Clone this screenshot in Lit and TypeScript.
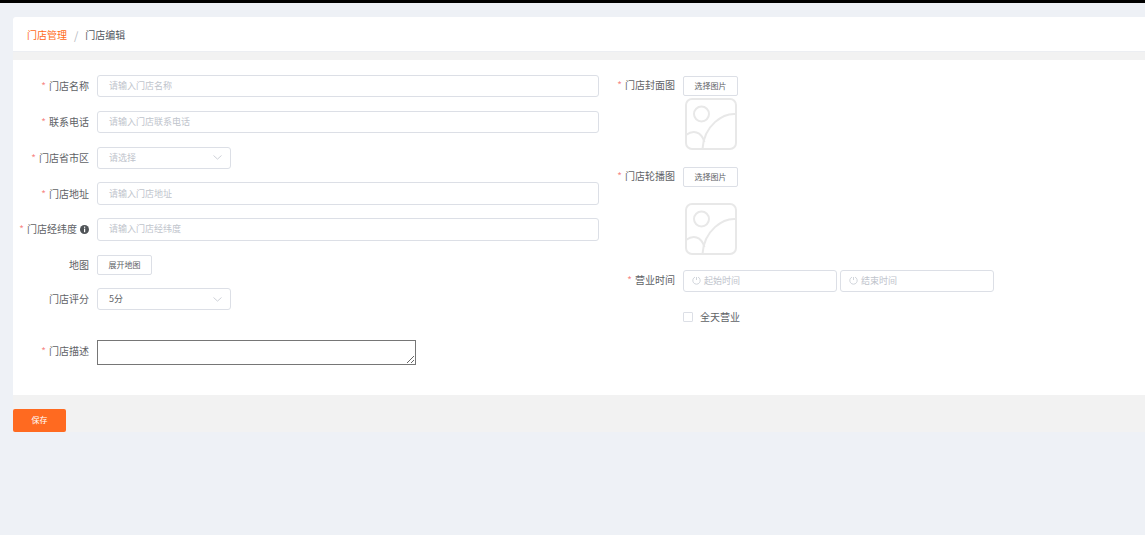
import { LitElement, html, css, svg } from "lit";
import { customElement } from "lit/decorators.js";

const FONT = css`"Noto Sans CJK SC", "Liberation Sans", sans-serif`;

const chevron = html`<svg class="chev" width="9" height="5" viewBox="0 0 9 5" fill="none"><path d="M.5.5l4 3.6 4-3.6" stroke="#c8ccd4" stroke-width=".9"/></svg>`;
const clock = html`<svg class="clock" width="9" height="9" viewBox="0 0 9 9" fill="none"><path d="M3 1.1a3.7 3.7 0 1 0 3 0" stroke="#ccd0d7" stroke-width=".9"/><path d="M4.5 1v3" stroke="#ccd0d7" stroke-width=".9"/></svg>`;
const info = html`<svg class="info" width="9" height="9" viewBox="0 0 9 9"><circle cx="4.5" cy="4.5" r="4.5" fill="#505458"/><rect x="4" y="1.6" width="1.2" height="1.2" fill="#fff"/><rect x="4" y="3.6" width="1.2" height="3.6" fill="#fff"/></svg>`;
const picture = svg`<rect x="1" y="1" width="50" height="50" rx="6" /><circle cx="16.5" cy="16" r="7.5" /><path d="M51 16C38 15 19 27 17.5 51" /><path d="M1 37C8 32 16 33 19.5 44" />`;

@customElement("app-root")
export class AppRoot extends LitElement {
  static styles = css`
    :host { display: block; height: 535px; background: #eef1f6; font-family: ${FONT}; color: #606266; font-size: 10px; overflow: hidden; }
    .topbar { height: 3px; background: #000; }
    .page { margin: 14px 0 0 13px; }
    .crumbs { height: 35px; background: #fff; border-radius: 3px 0 0 0; display: flex; align-items: center; padding: 1px 0 0 14px; box-sizing: border-box; border-bottom: 1px solid #eceef2; line-height: 14px; }
    .crumb-link { color: #ff6a20; }
    .sep { color: #b4b8c0; margin: 0 7px; font-size: 11px; }
    .crumb-current { color: #505660; }
    .band { height: 8px; background: #f2f2f2; }
    .form { background: #fff; height: 335px; display: flex; padding-top: 15px; box-sizing: border-box; }
    .col { width: 586px; flex: none; }
    .row { display: flex; align-items: center; }
    .label { width: 76px; flex: none; margin-right: 8px; display: flex; justify-content: flex-end; align-items: center; line-height: 14px; white-space: nowrap; }
    .star { color: #f78989; margin-right: 3px; }
    .info-wrap { margin-left: 3px; display: flex; }
    .input { height: 22.4px; box-sizing: border-box; border: 1px solid #dcdfe6; border-radius: 3px; background: #fff; display: flex; align-items: center; padding: 0 11px; font-size: 9px; color: #c0c4cc; line-height: 12px; }
    .left .row { margin-bottom: 13.4px; }
    .left .row.last-field { margin-bottom: 0; }
    .wide { width: 502px; }
    .select { width: 134px; justify-content: space-between; padding-right: 8px; }
    .select.filled { color: #606266; }
    .left .row.map { margin-top: 14.4px; margin-bottom: 13px; }
    .left .row.rate { margin-bottom: 30px; }
    .desc-label { margin-top: -4px; }
    .btn { height: 20px; box-sizing: border-box; border: 1px solid #dcdfe6; border-radius: 2px; background: #fff; display: flex; align-items: center; justify-content: center; font-size: 8px; color: #606266; line-height: 12px; }
    .btn-map { width: 55px; }
    .btn-pick { width: 55px; }
    textarea { display: block; box-sizing: border-box; width: 319px; height: 25px; margin: 0; padding: 2px; border: 1px solid #767676; background: #fff; }
    .right { padding-top: 1px; }
    .right .label { margin-top: -2px; }
    .img { display: block; margin-left: 86px; fill: none; stroke: #e8e8e8; stroke-width: 2; }
    .img1 { margin-top: 2px; margin-bottom: 17.3px; }
    .img2 { margin-top: 15.3px; margin-bottom: 15px; }
    .times { display: flex; gap: 3px; }
    .time { width: 154px; height: 22.7px; padding: 0 0 0 8px; gap: 3px; }
    .allday { display: flex; align-items: center; margin: 19.5px 0 0 84px; height: 10px; line-height: 10px; }
    .check { width: 10px; height: 10px; box-sizing: border-box; border: 1px solid #dcdfe6; border-radius: 1px; margin-right: 7px; }
    .footer { background: #f2f2f2; height: 37px; padding-top: 14px; box-sizing: border-box; }
    .save { width: 53px; height: 23px; padding-bottom: 1px; box-sizing: border-box; background: #ff6a20; border-radius: 2px; color: #fff; font-size: 8px; display: flex; align-items: center; justify-content: center; line-height: 12px; }
  `;

  private label(text: string, required = true, cls = "") {
    return html`<div class="label ${cls}">${required ? html`<span class="star">*</span>` : ""}${text}</div>`;
  }

  private field(label: string, placeholder: string) {
    return html`<div class="row">${this.label(label)}<div class="input wide">${placeholder}</div></div>`;
  }

  private pic(cls: string) {
    return html`<svg class="img ${cls}" width="52" height="52" viewBox="0 0 52 52">${picture}</svg>`;
  }

  render() {
    return html`
      <div class="topbar"></div>
      <div class="page">
        <div class="crumbs">
          <span class="crumb-link">门店管理</span><span class="sep">/</span><span class="crumb-current">门店编辑</span>
        </div>
        <div class="band"></div>
        <div class="form">
          <div class="col left">
            ${this.field("门店名称", "请输入门店名称")}
            ${this.field("联系电话", "请输入门店联系电话")}
            <div class="row">${this.label("门店省市区")}<div class="input select">请选择${chevron}</div></div>
            ${this.field("门店地址", "请输入门店地址")}
            <div class="row last-field">
              <div class="label"><span class="star">*</span>门店经纬度<span class="info-wrap">${info}</span></div>
              <div class="input wide">请输入门店经纬度</div>
            </div>
            <div class="row map">${this.label("地图", false)}<div class="btn btn-map">展开地图</div></div>
            <div class="row rate">${this.label("门店评分", false)}<div class="input select filled">5分${chevron}</div></div>
            <div class="row">${this.label("门店描述", true, "desc-label")}<textarea></textarea></div>
          </div>
          <div class="col right">
            <div class="row">${this.label("门店封面图")}<div class="btn btn-pick">选择图片</div></div>
            ${this.pic("img1")}
            <div class="row">${this.label("门店轮播图")}<div class="btn btn-pick">选择图片</div></div>
            ${this.pic("img2")}
            <div class="row">${this.label("营业时间")}
              <div class="times">
                <div class="input time">${clock}起始时间</div>
                <div class="input time">${clock}结束时间</div>
              </div>
            </div>
            <div class="allday"><span class="check"></span>全天营业</div>
          </div>
        </div>
        <div class="footer"><div class="save">保存</div></div>
      </div>
    `;
  }
}
